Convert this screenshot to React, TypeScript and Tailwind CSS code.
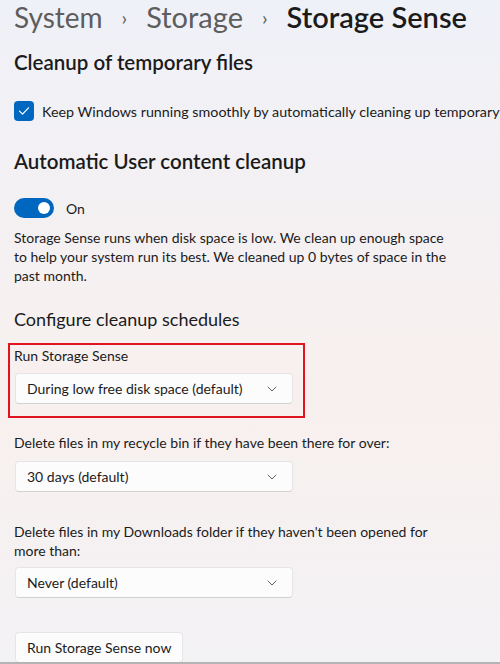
import React from 'react';

function Chevron() {
  return (
    <svg width="10" height="6" viewBox="0 0 10 6" fill="none" className="shrink-0">
      <path d="M1 1l4 4 4-4" stroke="#5f5f5f" strokeWidth="1" strokeLinecap="round" strokeLinejoin="round" />
    </svg>
  );
}

function Dropdown({ value, className = '' }: { value: string; className?: string }) {
  return (
    <div
      className={`ml-px flex h-[31px] w-[278px] items-center justify-between rounded-[4px] border border-[#e6e4e4] border-b-[#d2d0d0] bg-[#fdfcfc] pl-[11px] pr-[15px] text-[14px] text-[#1b1b1b] ${className}`}
    >
      <span>{value}</span>
      <Chevron />
    </div>
  );
}

export default function App() {
  return (
    <div
      className="relative h-[664px] w-[500px] overflow-hidden bg-linear-to-b from-[#eff1f8] via-[#f8f0ee] via-60% to-[#f3f2f5] px-[14px] text-[#1b1b1b]"
      style={{ fontFamily: 'Lato, "Open Sans", sans-serif' }}
    >
      {/* breadcrumb */}
      <div className="flex items-center whitespace-nowrap text-[28px] leading-[34px]">
        <span className="text-[#5d5d5d]">System</span>
        <span className="mx-[19px] text-[20px] text-[#5d5d5d]">›</span>
        <span className="text-[29px] text-[#5d5d5d]">Storage</span>
        <span className="mx-[19px] text-[20px] text-[#5d5d5d]">›</span>
        <span className="text-[29px] font-semibold">Storage Sense</span>
      </div>

      <h2 className="mt-[14px] text-[20.5px] font-semibold leading-[28px]">Cleanup of temporary files</h2>

      <div className="mt-[25px] flex h-[20px] items-center gap-[8px] whitespace-nowrap">
        <div className="flex h-[20px] w-[20px] shrink-0 items-center justify-center rounded-[4px] bg-[#0067c0]">
          <svg width="12" height="10" viewBox="0 0 12 10" fill="none">
            <path d="M1.5 5.2l3 3 6-6.4" stroke="white" strokeWidth="1.2" strokeLinecap="round" strokeLinejoin="round" />
          </svg>
        </div>
        <span className="text-[14.3px] leading-[19px]">
          Keep Windows running smoothly by automatically cleaning up temporary system and app files
        </span>
      </div>

      <h2 className="mt-[26px] text-[20.5px] font-semibold leading-[28px]">Automatic User content cleanup</h2>

      <div className="mt-[23px] flex h-[20px] items-center gap-[12px]">
        <div className="flex h-[20px] w-[40px] items-center justify-end rounded-full bg-[#0067c0] pr-[4px]">
          <div className="h-[12px] w-[12px] rounded-full bg-white" />
        </div>
        <span className="text-[14px] leading-[19px]">On</span>
      </div>

      <p className="mt-[10px] text-[14px] leading-[19px]">
        Storage Sense runs when disk space is low. We clean up enough space
        <br />
        to help your system run its best. We cleaned up 0 bytes of space in the
        <br />
        past month.
      </p>

      <h2 className="mt-[22px] text-[18px] leading-[24px]">Configure cleanup schedules</h2>

      <div className="relative">
        <div className="pt-[15px] text-[14px] leading-[19px]">Run Storage Sense</div>
        <Dropdown value="During low free disk space (default)" className="mt-[8px]" />
        {/* highlight annotation */}
        <div className="pointer-events-none absolute left-[-6px] top-[12px] h-[75px] w-[297px] border-2 border-[#e0141e]" />
      </div>

      <div className="mt-[29px] text-[14px] leading-[19px]">
        Delete files in my recycle bin if they have been there for over:
      </div>
      <Dropdown value="30 days (default)" className="mt-[9px]" />

      <div className="mt-[30px] text-[14px] leading-[19px]">
        Delete files in my Downloads folder if they haven't been opened for
        <br />
        more than:
      </div>
      <Dropdown value="Never (default)" className="mt-[7px]" />

      <button className="ml-px mt-[34px] flex h-[31px] items-center rounded-[4px] border border-[#e6e4e4] border-b-[#d2d0d0] bg-[#fdfcfc] px-[11px] text-[14px] text-[#1b1b1b]">
        Run Storage Sense now
      </button>

      <div className="absolute bottom-0 left-0 right-0 h-[2px] bg-[#b4b4b4]" />
    </div>
  );
}
